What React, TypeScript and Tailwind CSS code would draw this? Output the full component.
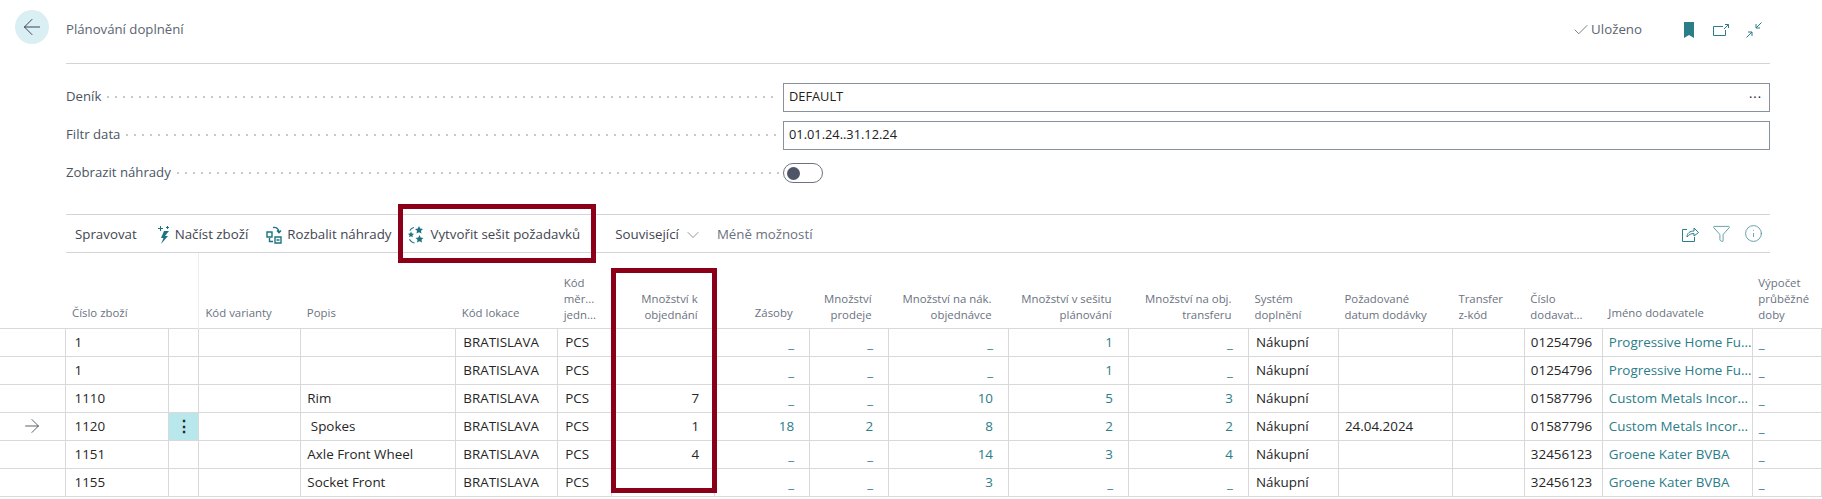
// Plánování doplnění — requisition worksheet page, static mock of the screenshot.
import type { ReactNode } from "react";
import { ArrowLeft, ArrowRight, Check, ChevronDown, Filter, Info } from "lucide-react";

const font = "font-['Open_Sans','Liberation_Sans',sans-serif]";

const columns = [
  { w: "w-[66px]" },
  { w: "w-[103px]", label: ["Číslo zboží"] },
  { w: "w-[30px]" },
  { w: "w-[102px]", label: ["Kód varianty"] },
  { w: "w-[155px]", label: ["Popis"] },
  { w: "w-[102px]", label: ["Kód lokace"] },
  { w: "w-[54px]", label: ["Kód", "měr...", "jedn..."] },
  { w: "w-[103px]", label: ["Množství k", "objednání"], right: true },
  { w: "w-[95px]", label: ["Zásoby"], right: true },
  { w: "w-[79px]", label: ["Množství", "prodeje"], right: true },
  { w: "w-[120px]", label: ["Množství na nák.", "objednávce"], right: true },
  { w: "w-[120px]", label: ["Množství v sešitu", "plánování"], right: true },
  { w: "w-[120px]", label: ["Množství na obj.", "transferu"], right: true },
  { w: "w-[90px]", label: ["Systém", "doplnění"] },
  { w: "w-[114px]", label: ["Požadované", "datum dodávky"] },
  { w: "w-[72px]", label: ["Transfer", "z-kód"] },
  { w: "w-[78px]", label: ["Číslo", "dodavat..."] },
  { w: "w-[150px]", label: ["Jméno dodavatele"] },
  { w: "w-[69px]", label: ["Výpočet", "průběžné", "doby"] },
];

const rows = [
  { no: "1", desc: "", qty: "", stock: "_", sales: "_", po: "_", plan: "1", tr: "_", date: "", vendor: "01254796", name: "Progressive Home Fu..." },
  { no: "1", desc: "", qty: "", stock: "_", sales: "_", po: "_", plan: "1", tr: "_", date: "", vendor: "01254796", name: "Progressive Home Fu..." },
  { no: "1110", desc: "Rim", qty: "7", stock: "_", sales: "_", po: "10", plan: "5", tr: "3", date: "", vendor: "01587796", name: "Custom Metals Incor..." },
  { no: "1120", desc: " Spokes", qty: "1", stock: "18", sales: "2", po: "8", plan: "2", tr: "2", date: "24.04.2024", vendor: "01587796", name: "Custom Metals Incor...", current: true },
  { no: "1151", desc: "Axle Front Wheel", qty: "4", stock: "_", sales: "_", po: "14", plan: "3", tr: "4", date: "", vendor: "32456123", name: "Groene Kater BVBA" },
  { no: "1155", desc: "Socket Front", qty: "", stock: "_", sales: "_", po: "3", plan: "_", tr: "_", date: "", vendor: "32456123", name: "Groene Kater BVBA" },
];

function Bookmark() {
  return (
    <svg width="10" height="16" viewBox="0 0 10 16" className="fill-[#2b7d88]">
      <path d="M0 0h10v16l-5-3-5 3z" />
    </svg>
  );
}

function OpenNew() {
  return (
    <svg width="16" height="12" viewBox="0 0 16 12" fill="none" className="stroke-[#2b7d88]">
      <path d="M10 2.500H.5v9h12V6M11 5l4.500-4.500M12 .5h3.500V4" />
    </svg>
  );
}

function Collapse() {
  return (
    <svg width="16" height="16" viewBox="0 0 16 16" fill="none" className="stroke-[#2b7d88]">
      <path d="M15.500.5 10 6M10 2v4h4M.5 15.500 6 10M2 10h4v4" />
    </svg>
  );
}

function Share() {
  return (
    <svg width="17" height="16" viewBox="0 0 17 16" fill="none" className="stroke-[#2b7d88]">
      <path d="M5 3.500H.5v12h12V11M5 11c0-4 3-6 7-6V2l4.500 4.500L12 10V7.500c-3 0-5 1-7 3.500z" />
    </svg>
  );
}

function Bolt() {
  return (
    <svg width="12" height="18" viewBox="0 0 12 18" className="fill-[#1d7480]">
      <path d="M6 5h5L7 10h3l-7 8 2.500-6H3z" />
      <path d="M2 0h1v2h2v1H3v2H2V3H0V2h2zM9 0h1v1h1v1h-1v1H9V2H8V1h1z" />
    </svg>
  );
}

function Expand() {
  return (
    <svg width="16" height="18" viewBox="0 0 16 18" fill="none" className="stroke-[#1d7480] stroke-[1.4]">
      <path d="M1 6h5v5H1zM9 11h6v6H9zM10.500 14h3" />
      <path d="M7 1.500c3.500-.5 6 1.500 6 5M11 4.500l2 2.200 2-2.200M7 15.500H3.500V12" />
    </svg>
  );
}

function Stars() {
  return (
    <svg width="17" height="18" viewBox="0 0 17 18" className="fill-[#1d7480]">
      <path d="m11 0 1.200 2.600 2.800.3-2 1.900.5 2.800L11 6.200 8.500 7.600 9 4.800 7 2.900l2.800-.3z" />
      <path d="m11.500 9 1.200 2.600 2.800.3-2 1.900.5 2.800-2.500-1.400L9 16.600l.5-2.800-2-1.900 2.800-.3z" />
      <path d="m3 5.500.9 2 2.100.2-1.500 1.500.4 2.100L3 10.200l-1.900 1.100.4-2.100L0 7.700 2.100 7.500z" />
      <path d="M6 1v1C4.500 2.500 3 3.300 2.500 4.700l-1-.3C2 2.800 4 1.500 6 1zM2 13c1 1.800 2.500 3 4.500 3.500v1C4 17 2 15.500 1 13.500z" />
    </svg>
  );
}

function ActionButton({ icon, label, className }: { icon?: ReactNode; label: string; className?: string }) {
  return (
    <div className={`flex items-center gap-[5px] ${className ?? ""}`}>
      {icon}
      <span>{label}</span>
    </div>
  );
}

function FieldRow({ label, children }: { label: string; children: ReactNode }) {
  return (
    <div className="flex h-[38px] items-center">
      <span className="shrink-0 pr-[3px] text-[13.200px] text-[#4b5563]">{label}</span>
      <span className="mr-[4px] h-[2px] flex-1 bg-[radial-gradient(circle,#c8c8c8_1px,transparent_1px)] bg-[length:8px_2px]" />
      <div className="w-[987px] shrink-0">{children}</div>
    </div>
  );
}

function Blank({ value }: { value: string }) {
  return <span className={value === "_" ? "relative top-[1px]" : ""}>{value}</span>;
}

export default function App() {
  return (
    <div className={`relative h-[499px] w-[1822px] overflow-hidden bg-white ${font}`}>
      <header className="flex h-[64px] items-start">
        <div className="ml-[15px] mt-[10px] flex h-[34px] w-[34px] items-center justify-center rounded-full bg-[#d9eff3]">
          <ArrowLeft size={26} strokeWidth={0.9} className="text-[#374151]" />
        </div>
        <div className="ml-[17px] flex h-[64px] w-[1704px] items-start border-b border-[#d4d4d8] pt-[20px]">
          <span className="text-[13.200px] leading-[18px] text-[#5b6470]">Plánování doplnění</span>
          <div className="ml-auto flex items-center pr-[8px]">
            <Check size={18} strokeWidth={1} className="text-[#4b5563]" />
            <span className="ml-[1px] text-[13.300px] text-[#5b6470]">Uloženo</span>
            <div className="ml-[42px]"><Bookmark /></div>
            <div className="ml-[19px]"><OpenNew /></div>
            <div className="ml-[17px]"><Collapse /></div>
          </div>
        </div>
      </header>

      <section className="ml-[66px] mr-[52px] flex h-[150px] flex-col pt-[14px]">
        <FieldRow label="Deník">
          <div className="flex h-[29px] items-center justify-between border border-[#8a919e] pl-[5px] pr-[7px] text-[12.800px] text-[#212121]">
            DEFAULT
            <span className="mb-[6px] tracking-[1px]">...</span>
          </div>
        </FieldRow>
        <FieldRow label="Filtr data">
          <div className="flex h-[29px] items-center border border-[#8a919e] pl-[5px] text-[12.800px] text-[#212121]">
            01.01.24..31.12.24
          </div>
        </FieldRow>
        <FieldRow label="Zobrazit náhrady">
          <div className="flex h-[20px] w-[40px] items-center rounded-full border border-[#6b7280] pl-[3px]">
            <span className="h-[13px] w-[13px] rounded-full bg-[#4f5568]" />
          </div>
        </FieldRow>
      </section>

      <nav className="ml-[66px] mr-[52px] flex h-[39px] items-center border-y border-[#d4d4d8] pl-[9px] pt-[2px] text-[13.300px] text-[#3f4650]">
        <ActionButton label="Spravovat" />
        <ActionButton icon={<Bolt />} label="Načíst zboží" className="ml-[21px]" />
        <ActionButton icon={<Expand />} label="Rozbalit náhrady" className="ml-[18px]" />
        <ActionButton icon={<Stars />} label="Vytvořit sešit požadavků" className="ml-[17px]" />
        <div className="ml-[35px] flex items-center gap-[4px]">
          <span>Související</span>
          <ChevronDown size={20} strokeWidth={0.9} className="text-[#6b7280]" />
        </div>
        <span className="ml-[14px] text-[13.300px] text-[#6b7280]">Méně možností</span>
        <div className="ml-auto flex items-center gap-[13px] pr-[7px] pb-[2px] text-[#2b7d88]">
          <Share />
          <Filter size={19} strokeWidth={0.9} />
          <Info size={19} strokeWidth={0.9} />
        </div>
      </nav>

      <table className="table-fixed border-collapse whitespace-nowrap text-[13.400px] text-[#262626]">
        <colgroup>
          {columns.map((c, i) => (
            <col key={i} className={c.w} />
          ))}
        </colgroup>
        <thead>
          <tr className="h-[75px]">
            {columns.map((c, i) => (
              <th
                key={i}
                className={`align-bottom text-[11.400px] leading-[16px] font-normal text-[#6b7280] ${
                  c.right ? "pr-[17px] text-right" : "pl-[6px] text-left"
                } ${c.label?.length === 1 ? "pb-[7px]" : "pb-[5px]"} ${i === 3 ? "border-l border-[#eeeeee]" : ""}`}
              >
                {c.label?.map((l) => (
                  <div key={l}>{l}</div>
                ))}
              </th>
            ))}
          </tr>
        </thead>
        <tbody className="border-t border-[#d9d9d9] [&_td]:h-[28px] [&_td]:border-b [&_td]:border-[#d9d9d9] [&_td]:py-0">
          {rows.map((r, i) => (
            <tr key={i}>
              <td className="border-r p-0">
                {r.current && <ArrowRight size={22} strokeWidth={0.9} className="ml-[21px] text-[#374151]" />}
              </td>
              <td className="border-r pl-[8px]">{r.no}</td>
              <td className={`border-r px-0 text-center ${r.current ? "bg-[#b9e8ec] text-[16px] font-bold" : ""}`}>
                {r.current ? "⋮" : ""}
              </td>
              <td className="border-r" />
              <td className="border-r pl-[6px] whitespace-pre">{r.desc}</td>
              <td className="border-r pl-[7px]">BRATISLAVA</td>
              <td className="border-r pl-[7px]">PCS</td>
              <td className="border-r pr-[15px] text-right">{r.qty}</td>
              <td className="border-r pr-[15px] text-right text-[#2b7d88]"><Blank value={r.stock} /></td>
              <td className="border-r pr-[15px] text-right text-[#2b7d88]"><Blank value={r.sales} /></td>
              <td className="border-r pr-[15px] text-right text-[#2b7d88]"><Blank value={r.po} /></td>
              <td className="border-r pr-[15px] text-right text-[#2b7d88]"><Blank value={r.plan} /></td>
              <td className="border-r pr-[15px] text-right text-[#2b7d88]"><Blank value={r.tr} /></td>
              <td className="border-r pl-[7px]">Nákupní</td>
              <td className="border-r pl-[6px]">{r.date}</td>
              <td className="border-r" />
              <td className="border-r pl-[6px]">{r.vendor}</td>
              <td className="border-r pl-[6px] text-[#2b7d88]">{r.name}</td>
              <td className="border-r pl-[6px] text-[#2b7d88]"><Blank value="_" /></td>
            </tr>
          ))}
        </tbody>
      </table>

      {/* red call-outs drawn over the toolbar and the quantity column */}
      <div className="absolute left-[398px] top-[204px] h-[59px] w-[198px] border-[5px] border-[#8b0018]" />
      <div className="absolute left-[611px] top-[268px] h-[225px] w-[106px] border-[5px] border-[#8b0018]" />
    </div>
  );
}
